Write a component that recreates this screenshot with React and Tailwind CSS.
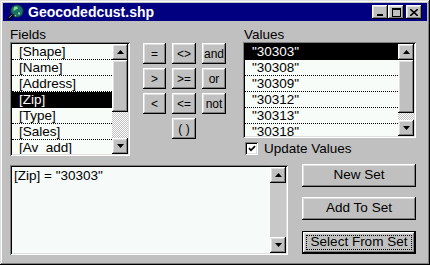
import React from 'react'

const raised = 'shadow-[inset_-1px_-1px_0_#000,inset_1px_1px_0_#fff,inset_-2px_-2px_0_#808080,inset_2px_2px_0_#dfdfdf]'
const sunken = 'shadow-[inset_1px_1px_0_#808080,inset_-1px_-1px_0_#fff,inset_2px_2px_0_#000,inset_-2px_-2px_0_#dfdfdf]'
const dither = 'bg-[repeating-conic-gradient(#c0c0c0_0%_25%,#ffffff_0%_50%)] bg-size-[2px_2px]'

const FIELDS = ['[Shape]', '[Name]', '[Address]', '[Zip]', '[Type]', '[Sales]', '[Av_add]']
const VALUES = ['"30303"', '"30308"', '"30309"', '"30312"', '"30313"', '"30318"']

function Arrow({ down }) {
  return (
    <svg width="7" height="4" viewBox="0 0 7 4">
      <path d={down ? 'M0 0H7L3.5 4Z' : 'M3.5 0L7 4H0Z'} fill="#000" />
    </svg>
  )
}

function ArrowBtn({ down }) {
  return (
    <div className={`h-[16px] w-[16px] flex-shrink-0 bg-[#c0c0c0] flex items-center justify-center ${raised}`}>
      <Arrow down={down} />
    </div>
  )
}

function ScrollBar({ thumb, plain }) {
  return (
    <div className="w-[16px] h-full flex flex-col flex-shrink-0">
      <ArrowBtn />
      {thumb && <div className={`w-[16px] bg-[#c0c0c0] flex-shrink-0 ${raised}`} style={{ height: thumb }} />}
      <div className={`flex-1 ${plain ? 'bg-[#c8c8c8]' : dither}`} />
      <ArrowBtn down />
    </div>
  )
}

function ListBox({ items, selected, thumb, className }) {
  return (
    <div className={`bg-[#f8fcf8] p-[2px] flex ${sunken} ${className}`}>
      <div className="flex-1 overflow-hidden">
        {items.map((item, i) => (
          <div
            key={item}
            className={`h-[16px] leading-[15px] pl-[7px] border-b border-dotted border-black whitespace-nowrap ${i === selected ? 'bg-black text-white' : ''}`}
          >
            {item}
          </div>
        ))}
      </div>
      <ScrollBar thumb={thumb} />
    </div>
  )
}

function OpBtn({ label, className = '' }) {
  return (
    <div className={`h-[21px] bg-[#c0c0c0] flex items-center justify-center text-[12px] ${raised} ${className}`}>
      {label}
    </div>
  )
}

function Button({ children }) {
  return (
    <div className={`h-[23px] bg-[#c0c0c0] flex items-center justify-center ${raised}`}>
      {children}
    </div>
  )
}

function TitleBtn({ children }) {
  return (
    <div className={`w-[16px] h-[14px] bg-[#c0c0c0] flex items-center justify-center ${raised}`}>
      {children}
    </div>
  )
}

export default function App() {
  return (
    <div className="w-[430px] h-[265px] bg-[#c0c0c0] p-[3px] flex flex-col font-['Liberation_Sans',Arial,sans-serif] text-[13.5px] text-black shadow-[inset_-1px_-1px_0_#000,inset_1px_1px_0_#dfdfdf,inset_-2px_-2px_0_#808080,inset_2px_2px_0_#fff]">
      {/* Title bar */}
      <div className="h-[18px] bg-[#000080] flex items-center pl-[4px] pr-[5px]">
        <svg width="17" height="16" viewBox="0 0 17 16" className="flex-shrink-0">
          <circle cx="10" cy="7" r="6.3" fill="#1d6f68" stroke="#0a2440" strokeWidth="1" />
          <path d="M7 3.2c1.6-1.2 3.6-.4 4 1-.7 1.2-2.2.7-2.9 1.8-.5 1.1-1.8.7-1.6-.6z" fill="#7fe08a" />
          <path d="M11.5 8c1.1.2 2 1 1.6 2.2-.9.7-2 .3-2.1-.7z" fill="#7fe08a" />
          <path d="M8 11c.8 0 1.4.6 1.2 1.3-.6.3-1.3 0-1.4-.6z" fill="#7fe08a" />
          <path d="M5.5 10.8L1.5 14.8" stroke="#000" strokeWidth="2.4" strokeLinecap="round" />
          <path d="M5.2 10.6L2 13.8" stroke="#c0c0c0" strokeWidth="0.8" />
        </svg>
        <span className="ml-[4px] text-white font-bold text-[14px] leading-[18px]">Geocodedcust.shp</span>
        <div className="ml-auto flex items-center">
          <TitleBtn>
            <svg width="8" height="7" viewBox="0 0 8 7"><rect x="1" y="5" width="6" height="2" fill="#000" /></svg>
          </TitleBtn>
          <TitleBtn>
            <svg width="9" height="9" viewBox="0 0 9 9"><path d="M0 0H9V9H0ZM1 2V8H8V2Z" fill="#000" fillRule="evenodd" /></svg>
          </TitleBtn>
          <div className="w-[2px]" />
          <TitleBtn>
            <svg width="8" height="7" viewBox="0 0 8 7"><path d="M0 0L8 7M8 0L0 7" stroke="#000" strokeWidth="1.6" /></svg>
          </TitleBtn>
        </div>
      </div>

      {/* Top section */}
      <div className="flex pt-[6px] pl-[7px]">
        <div className="w-[120px] flex flex-col">
          <div className="h-[15px] leading-[15px]">Fields</div>
          <ListBox items={FIELDS} selected={3} thumb={52} className="h-[114px]" />
        </div>

        <div className="ml-[13px] mt-[16px] grid grid-cols-[23px_24px_24px] gap-x-[6px] gap-y-[4px] content-start">
          <OpBtn label="=" />
          <OpBtn label="<>" />
          <OpBtn label="and" />
          <OpBtn label=">" />
          <OpBtn label=">=" />
          <OpBtn label="or" />
          <OpBtn label="<" />
          <OpBtn label="<=" />
          <OpBtn label="not" />
          <OpBtn label="( )" className="col-start-2" />
        </div>

        <div className="ml-[17px] w-[173px] flex flex-col">
          <div className="h-[15px] leading-[15px] pl-[1px]">Values</div>
          <ListBox items={VALUES} selected={0} thumb={53} className="h-[96px]" />
          <div className="flex items-center mt-[4px] ml-[2px] h-[13px]">
            <div className={`w-[13px] h-[13px] bg-white flex items-center justify-center ${sunken}`}>
              <svg width="8" height="7" viewBox="0 0 8 7">
                <path d="M1 3.2L3 5.3L7 1.2" stroke="#000" strokeWidth="1.7" fill="none" />
              </svg>
            </div>
            <span className="ml-[6px] leading-[15px]">Update Values</span>
          </div>
        </div>
      </div>

      {/* Bottom section */}
      <div className="flex items-start pl-[7px] mt-[8px]">
        <div className={`mt-[1px] w-[278px] h-[90px] bg-[#f6fbf9] p-[2px] flex ${sunken}`}>
          <div className="flex-1 pl-[2px] pt-[1px] leading-[16px] whitespace-nowrap">[Zip] = "30303"</div>
          <ScrollBar plain />
        </div>

        <div className="ml-[14px] w-[114px] flex flex-col">
          <Button>New Set</Button>
          <div className="h-[10px]" />
          <Button>Add To Set</Button>
          <div className="h-[11px]" />
          <div className="h-[23px] border border-black">
            <div className={`h-full bg-[#c0c0c0] p-[3px] ${raised}`}>
              <div className="h-full border border-dotted border-black flex items-center justify-center">
                Select From Set
              </div>
            </div>
          </div>
        </div>
      </div>
    </div>
  )
}
